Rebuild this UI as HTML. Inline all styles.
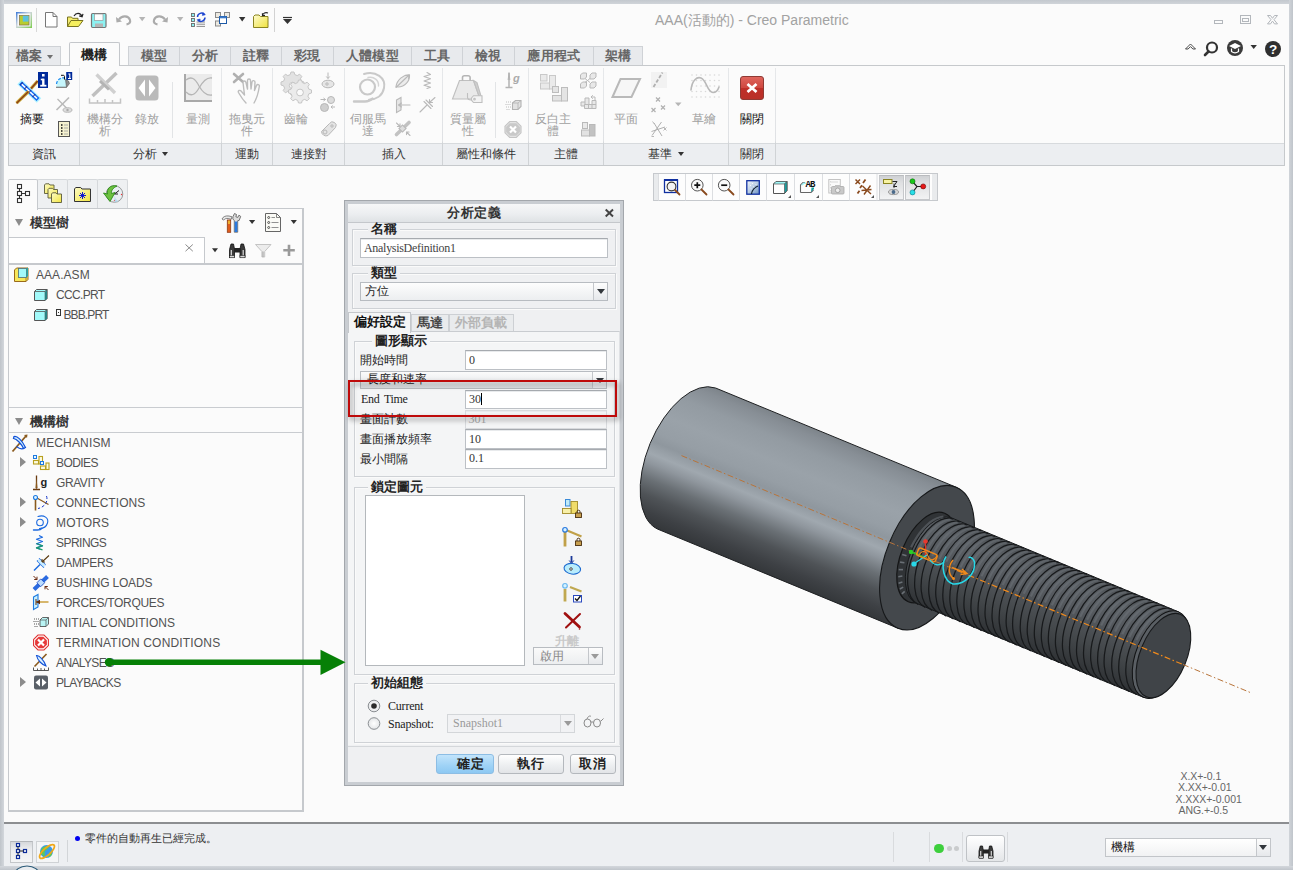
<!DOCTYPE html>
<html lang="zh-Hant">
<head>
<meta charset="utf-8">
<title>AAA - Creo Parametric</title>
<style>
*{box-sizing:border-box;margin:0;padding:0}
html,body{width:1293px;height:870px;overflow:hidden}
body{position:relative;background:#fbfbfb;font-family:"Liberation Sans",sans-serif;font-size:12px;color:#444}
.abs{position:absolute}
.sans{font-family:"Liberation Sans",sans-serif}
.serif{font-family:"Liberation Serif",serif}
/* window frame */
#fr-l{left:0;top:0;width:4px;height:870px;background:linear-gradient(90deg,#bfc4ca,#d3d7dc)}
#fr-t{left:0;top:0;width:1293px;height:4px;background:linear-gradient(180deg,#c3c8ce,#d0d4d9)}
#fr-r{left:1289px;top:0;width:4px;height:870px;background:linear-gradient(90deg,#d0d4d9,#c0c5cb)}
#fr-b{left:0;top:866px;width:1293px;height:4px;background:linear-gradient(180deg,#d3d7dc,#c0c5cb)}
/* title */
#title{left:655px;top:12px;font-size:14px;color:#a2a2a2;white-space:nowrap}
/* ribbon tabs */
.rtab{position:absolute;top:46px;height:19px;background:#e8eaed;border:1px solid #cfd2d6;border-bottom:none;font-family:"Liberation Sans",sans-serif;font-weight:bold;font-size:13.3px;color:#666;text-align:center;line-height:17px;white-space:nowrap;letter-spacing:0.4px}
.rtab.act{top:42px;height:24px;background:#fbfbfb;color:#222;line-height:24px;border-color:#c4c7cb;z-index:3;border-radius:2px 2px 0 0}
#ribbon{left:8px;top:65px;width:1277px;height:101px;border:1px solid #c6c9cc;background:#fbfbfb}
#rlabels{left:9px;top:143px;width:1275px;height:22px;background:#eceef1;border-top:1px solid #d7dadd}
.gsep{position:absolute;top:68px;width:1px;height:97px;background:linear-gradient(180deg,#e6e8ea,#dfe1e4 75%,#d0d3d6 78%)}
.glab{position:absolute;top:144px;height:21px;line-height:20.5px;text-align:center;font-size:12px;color:#333;white-space:nowrap}
.blab{position:absolute;text-align:center;font-size:11.8px;line-height:12px;color:#a0a0a0;white-space:nowrap;transform:translateX(-50%)}
.blab.on{color:#111}
.tsep{position:absolute;width:1px;background:#e2e4e6}
/* left panel */
#lp{left:8px;top:208px;width:296px;height:603.5px;border:1.5px solid #c6c9cd;border-right-width:2.2px;border-bottom-width:2px;background:#fbfbfb}
.ltab{position:absolute;top:179px;height:30px;width:30px;background:#eef0f2;border:1px solid #d5d8db;border-bottom:none;border-radius:2px 2px 0 0}
.ltab.act{background:#fbfbfb;border-color:#c6c9cd;z-index:2;height:31px}
.hline{position:absolute;height:1px;background:#c9ccd0}
.phead{position:absolute;font-family:"Liberation Sans",sans-serif;font-weight:bold;font-size:13px;color:#333;white-space:nowrap}
.ti{position:absolute;font-size:12px;color:#525252;white-space:nowrap;line-height:14px}
.tri-r{position:absolute;width:0;height:0;border-left:6.5px solid #8c8c8c;border-top:5px solid transparent;border-bottom:5px solid transparent;margin-top:-1px}
.tri-d{position:absolute;width:0;height:0;border-top:7px solid #8c8c8c;border-left:4.5px solid transparent;border-right:4.5px solid transparent}
.dd{position:absolute;width:0;height:0;border-top:4px solid #333;border-left:3.5px solid transparent;border-right:3.5px solid transparent}
/* dialog */
#dlg{left:344px;top:201px;width:280px;height:585px;background:#f0f1f3;border:1.5px solid #a9adb2;box-shadow:0 0 0 1px #d4d7da inset}
.fs{position:absolute;border:1px solid #d0d3d7}
.leg{position:absolute;background:#f5f6f7;font-family:"Liberation Sans",sans-serif;font-weight:bold;font-size:12.5px;color:#222;padding:0 3px;line-height:13px;white-space:nowrap}
.inp{position:absolute;background:#fff;border:1px solid #bcc0c5;border-top-color:#a6aaaf;box-shadow:0 1px 0 #e8eaec inset;font-family:"Liberation Serif",serif;font-size:12px;color:#333;line-height:16px;padding-left:3px;white-space:nowrap;overflow:hidden}
.dl{position:absolute;font-size:12px;color:#222;white-space:nowrap;line-height:14px}
.sel{position:absolute;background:linear-gradient(180deg,#fdfdfd,#eceef0);border:1px solid #b8bcc1;font-size:12px;color:#222;line-height:16px;padding-left:4px;white-space:nowrap;overflow:hidden}
.selarr{position:absolute;right:0;top:0;bottom:0;width:14px;border-left:1px solid #c4c7cb;background:linear-gradient(180deg,#fdfdfd,#e6e8eb)}
.selarr:after{content:"";position:absolute;left:2.5px;top:6px;border-top:5.5px solid #33373c;border-left:4px solid transparent;border-right:4px solid transparent}
.selarr.dis:after{border-top-color:#9a9a9a}
.btn{position:absolute;height:20px;border:1px solid #b4b8bd;border-radius:3px;background:linear-gradient(180deg,#ffffff,#eceef0 60%,#e2e4e7);font-family:"Liberation Sans",sans-serif;font-weight:bold;font-size:13px;color:#222;text-align:center;line-height:18px;letter-spacing:1px}
/* status */
#status{left:4px;top:822px;width:1285px;height:44px;background:#edeff2;border-top:2px solid #8c8e91}
</style>
</head>
<body>
<!-- FRAME -->
<div class="abs" id="fr-t"></div><div class="abs" id="fr-l"></div><div class="abs" id="fr-r"></div><div class="abs" id="fr-b"></div>
<div class="abs" id="title">AAA(活動的) - Creo Parametric</div>

<!-- QAT -->
<svg id="qat" class="abs" style="left:0;top:0" width="1293" height="66" viewBox="0 0 1293 66" fill="none">
<defs>
<linearGradient id="gapp" x1="0" y1="0" x2="1" y2="1"><stop offset="0" stop-color="#3a78d8"/><stop offset=".45" stop-color="#cfd6dc"/><stop offset="1" stop-color="#7ccc4c"/></linearGradient>
<linearGradient id="gfold" x1="0" y1="0" x2="1" y2="1"><stop offset="0" stop-color="#fdfbd0"/><stop offset="1" stop-color="#f0e23c"/></linearGradient>
</defs>
<!-- app icon -->
<rect x="16" y="12" width="16" height="16" fill="url(#gapp)"/>
<rect x="17.500" y="13.500" width="13" height="13" fill="#f6f8f8"/>
<rect x="19.500" y="15.500" width="9.500" height="9.500" fill="#b9cc2e" stroke="#8a7a4a" stroke-width=".8"/>
<rect x="22.800" y="15.800" width="5.800" height="5.800" fill="#5cc3df"/>
<path d="M36.500 8 V32" stroke="#d8d8d8"/>
<!-- new -->
<path d="M45.500 12.500 H53 L57 16.500 V27 H45.500 Z" fill="#fff" stroke="#777" stroke-width="1"/><path d="M53 12.500 V16.500 H57" stroke="#777" stroke-width="1"/>
<!-- open -->
<path d="M67.500 26.500 V17 h4 l1 1.300 h5.500 V20" fill="#f4ec70" stroke="#7a7420" stroke-width="1"/>
<path d="M67.500 26.500 L71 20.500 H83 L78.500 26.500 Z" fill="#f6ef5e" stroke="#7a7420" stroke-width="1"/>
<path d="M74 16 C76 12.500 80.500 12.500 82 16.500 m-2.800-.6 l2.900.9 l.9-2.900" stroke="#222" stroke-width="1.200"/>
<!-- save -->
<rect x="91.500" y="13.500" width="14.500" height="14" rx="1.200" fill="#8cf2f2" stroke="#767676" stroke-width="1.200"/>
<rect x="94.500" y="14" width="8.500" height="6.500" fill="#fdfdfd" stroke="#8a8a8a" stroke-width=".6"/>
<rect x="95" y="23.500" width="8" height="3.500" fill="#b5b5b5"/>
<!-- undo -->
<path d="M119 19.500 C122 15 128.500 15.500 130 20 C130.800 22.500 129 24 126.500 24.300" stroke="#ababab" stroke-width="2.200"/>
<path d="M116 17 L116.500 22.500 L122 21.500 Z" fill="#ababab"/>
<path d="M139 17 h6.400 l-3.200 4.200 z" fill="#b5b5b5"/>
<!-- redo -->
<path d="M165 19.500 C162 15 155.500 15.500 154 20 C153.200 22.500 155 24 157.500 24.300" stroke="#ababab" stroke-width="2.200"/>
<path d="M168 17 L167.500 22.500 L162 21.500 Z" fill="#ababab"/>
<path d="M177 17 h6.400 l-3.200 4.200 z" fill="#b5b5b5"/>
<!-- regenerate -->
<g stroke="#6a6a6a" stroke-width=".9"><rect x="191.500" y="13.500" width="3" height="3" fill="#8ef0f0"/><rect x="191.500" y="18.500" width="3" height="3" fill="#8ef0f0"/><rect x="191.500" y="23.500" width="3" height="3" fill="#8ef0f0"/></g>
<path d="M196.500 22 h8.500 M196.500 24.200 h8.500 M196.500 26.400 h8.500" stroke="#8a8a8a" stroke-width="1"/>
<path d="M197.500 17 a4 4 0 0 1 7-2.500 M205 17.500 a4 4 0 0 1-7 2.500" stroke="#1c44d0" stroke-width="1.500"/>
<path d="M203 12.500 l2.300 2.300 l-3 .6 z M199.500 22 l-2.300-2.300 l3-.6 z" fill="#1c44d0" stroke="#1c44d0" stroke-width=".6"/>
<!-- windows -->
<g fill="#ece9e1" stroke="#8a8a8a" stroke-width="1"><rect x="215.500" y="12.500" width="5" height="5"/><rect x="224.500" y="12.500" width="5" height="5"/><rect x="215.500" y="21" width="5" height="5"/></g>
<rect x="219.500" y="16.500" width="7" height="7" fill="#fff" stroke="#1c5aa8" stroke-width="1"/><rect x="219.500" y="16.500" width="7" height="1.800" fill="#3a78c8"/>
<path d="M239 17 h6.400 l-3.200 4.400 z" fill="#333"/>
<!-- folder with arrow -->
<path d="M253.500 27.500 V16.500 l1.500-1.500 h4 l1.500 1.500 h7.500 V27.500 Z" fill="url(#gfold)" stroke="#8a8420" stroke-width="1"/>
<path d="M262.500 15.500 C263 13 265.500 12 268 13 m-5.600.2 l.1 2.500 l2.500-.3" stroke="#222" stroke-width="1.100"/>
<path d="M274.500 8 V32" stroke="#d2d2d2"/>
<path d="M283 17.500 h9" stroke="#333" stroke-width="1.200"/><path d="M283 19 h9 l-4.500 5 z" fill="#333"/>
<!-- window buttons -->
<g stroke="#b3b7bc" stroke-width="1" fill="none">
<rect x="1214.500" y="20.500" width="8" height="3"/>
<rect x="1240.500" y="15.500" width="10" height="8"/><rect x="1242.500" y="18.500" width="6" height="3"/>
<path d="M1267.500 15.500 h3 l2 2.800 l2-2.800 h3 l-3.500 4.200 l3.500 4.200 h-3 l-2-2.800 l-2 2.800 h-3 l3.500-4.200 z"/>
</g>
<!-- right tools -->
<path d="M1185.500 49 L1190.500 44 L1195.500 49 h-2.600 l-2.400-2.400 l-2.400 2.400 z" stroke="#333" stroke-width=".9" fill="#fff"/>
<circle cx="1212" cy="47.500" r="5" stroke="#333" stroke-width="2.200" fill="#fdfdfd"/><path d="M1208.500 51.500 L1205 55" stroke="#333" stroke-width="2.600" stroke-linecap="round"/>
<circle cx="1235" cy="48" r="8" fill="#3a3a3a"/><path d="M1229 46 l6-3 l6 3 l-6 3 z" fill="#fff"/><path d="M1231.500 48.500 v3 c2 1.500 5 1.500 7 0 v-3" stroke="#fff" stroke-width="1.200"/>
<path d="M1250.500 45 h6.400 l-3.200 4 z" fill="#333"/>
<circle cx="1273" cy="49" r="8" fill="#2f2f2f"/>
<text x="1273" y="54" text-anchor="middle" font-family="Liberation Sans" font-weight="bold" font-size="13.500" fill="#fff">?</text>
</svg>

<!-- RIBBON TABS -->
<div class="rtab" style="left:8px;width:53px;text-align:left;padding-left:7px">檔案<span class="dd" style="left:38px;top:8px;border-top-color:#707070"></span></div>
<div class="rtab act" style="left:69px;width:51px">機構</div>
<div class="rtab" style="left:128px;width:52px">模型</div>
<div class="rtab" style="left:179px;width:52px">分析</div>
<div class="rtab" style="left:230px;width:52px">註釋</div>
<div class="rtab" style="left:281px;width:53px">彩現</div>
<div class="rtab" style="left:333px;width:79px">人體模型</div>
<div class="rtab" style="left:411px;width:52px">工具</div>
<div class="rtab" style="left:462px;width:53px">檢視</div>
<div class="rtab" style="left:514px;width:80px">應用程式</div>
<div class="rtab" style="left:593px;width:50px">架構</div>

<!-- RIBBON -->
<div class="abs" id="ribbon"></div>
<div class="abs" id="rlabels"></div>
<div id="rib-items">
<!-- group separators -->
<div class="gsep" style="left:79px"></div><div class="gsep" style="left:221px"></div><div class="gsep" style="left:272px"></div><div class="gsep" style="left:344px"></div><div class="gsep" style="left:442px"></div><div class="gsep" style="left:528px"></div><div class="gsep" style="left:603px"></div><div class="gsep" style="left:728px"></div><div class="gsep" style="left:775px"></div>
<div class="tsep" style="left:172px;top:82px;height:56px"></div>
<div class="tsep" style="left:495px;top:82px;height:56px"></div>
<!-- group labels -->
<div class="glab" style="left:9px;width:70px">資訊</div>
<div class="glab" style="left:80px;width:141px">分析 <span style="display:inline-block;width:0;height:0;border-top:4.5px solid #333;border-left:3.3px solid transparent;border-right:3.3px solid transparent;vertical-align:2px;margin-left:2px"></span></div>
<div class="glab" style="left:222px;width:50px">運動</div>
<div class="glab" style="left:273px;width:71px">連接對</div>
<div class="glab" style="left:345px;width:97px">插入</div>
<div class="glab" style="left:443px;width:85px">屬性和條件</div>
<div class="glab" style="left:529px;width:74px">主體</div>
<div class="glab" style="left:604px;width:124px">基準 <span style="display:inline-block;width:0;height:0;border-top:4.5px solid #333;border-left:3.3px solid transparent;border-right:3.3px solid transparent;vertical-align:2px;margin-left:2px"></span></div>
<div class="glab" style="left:729px;width:46px">關閉</div>
<!-- button labels -->
<div class="blab on" style="left:31.5px;top:113px">摘要</div>
<div class="blab" style="left:105px;top:113px">機構分<br>析</div>
<div class="blab" style="left:146.5px;top:113px">錄放</div>
<div class="blab" style="left:198px;top:113px">量測</div>
<div class="blab" style="left:246.5px;top:113px">拖曳元<br>件</div>
<div class="blab" style="left:295.5px;top:113px">齒輪</div>
<div class="blab" style="left:368px;top:113px">伺服馬<br>達</div>
<div class="blab" style="left:468px;top:113px">質量屬<br>性</div>
<div class="blab" style="left:553px;top:113px">反白主<br>體</div>
<div class="blab" style="left:626px;top:113px">平面</div>
<div class="blab" style="left:704px;top:113px">草繪</div>
<div class="blab on" style="left:752px;top:113px">關閉</div>
<!-- icons -->
<svg class="abs" style="left:0;top:0" width="1293" height="170" viewBox="0 0 1293 170" fill="none">
<!-- summary -->
<g>
 <path d="M28 92 L37.700 81" stroke="#c8a832" stroke-width="3.200"/><path d="M28 92 L37.700 81" stroke="#8a3a18" stroke-width="1.300"/>
 <path d="M19.500 82 L39 100.500" stroke="#a8f0ff" stroke-width="6.400"/>
 <path d="M20.500 83 L38 99.500" stroke="#1464f0" stroke-width="4.200"/>
 <path d="M21.500 84 L37 98.500" stroke="#fff" stroke-width="1.700"/>
 <path d="M21 83.500 L37.500 99" stroke="#0a208a" stroke-width="4.200" stroke-dasharray="1.200 4.500" opacity=".7"/>
 <path d="M16.500 103.200 L28.500 91.500" stroke="#c8a832" stroke-width="3.200"/><path d="M16.500 103.200 L28.500 91.500" stroke="#8a3a18" stroke-width="1.300"/>
 <rect x="38" y="72" width="10" height="16" fill="#002a9a"/>
 <rect x="42" y="74" width="2.600" height="2.500" fill="#fff"/><path d="M40.800 79.500 h3" stroke="#fff" stroke-width="1.600"/><path d="M43.300 78.700 v7" stroke="#fff" stroke-width="2.400"/><path d="M40.200 85.700 h6.200" stroke="#fff" stroke-width="1.800"/>
</g>
<!-- small info 1 -->
<g>
 <path d="M56.500 87 C56 81 59.500 77.500 64 77.500 L66 78.500 L66.500 87 Z" fill="#c6f6fc"/>
 <path d="M56.500 84 C57 80 60 77.500 65 77.800" stroke="#1a8af0" stroke-width="1.200" stroke-dasharray="3 1.500"/>
 <path d="M65.500 79.500 L68.500 81 L69.500 83.500 L66.500 87.500 Z" fill="#8a8a8a" stroke="#555" stroke-width=".6"/>
 <path d="M56 87.300 H66.500" stroke="#7a7a7a" stroke-width="1.200"/>
 <path d="M61 75.300 h2.200 c1 0 1.300 .5 1.300 1.500 v2.800" stroke="#111" stroke-width="1"/>
 <rect x="66.200" y="72" width="6" height="8" fill="#002a9a"/><path d="M68.300 74 h1.500 v4 M68 78.500 h3" stroke="#fff" stroke-width="1.100"/>
</g>
<!-- small 2 gray X with eye -->
<g stroke="#b9b9b9">
 <path d="M56.500 110 L69 97.500" stroke-width="1.600"/><path d="M57.500 99 L68 109.500" stroke-width="1.300"/>
 <ellipse cx="67.500" cy="110" rx="4.500" ry="2.300" stroke-width="1" fill="#ddd"/><circle cx="67.500" cy="110" r="1.200" fill="#aaa" stroke="none"/>
</g>
<!-- small 3 list -->
<g>
 <rect x="58.500" y="121.500" width="11" height="15" fill="#f6f2cf" stroke="#555" stroke-width="1"/>
 <path d="M61 125 h1.500 M61 128 h1.500 M61 131 h1.500 M61 134 h1.500" stroke="#111" stroke-width="1.500"/>
 <path d="M64 125 h4 M64 128 h4 M64 131 h4 M64 134 h4" stroke="#999" stroke-width="0.800"/>
</g>
<!-- mechanism analysis (gray) -->
<g>
 <path d="M92.500 96 L116.500 73" stroke="#c0c0c0" stroke-width="3.400"/><path d="M96.500 74.500 L115 93" stroke="#d0d0d0" stroke-width="3.400"/>
 <path d="M100 81 L109 89.500" stroke="#b4b4b4" stroke-width="3"/>
 <path d="M89.500 98.500 V103 H120.500 V98.500 M97.500 103 v-3 M105 103 v-4 M112.500 103 v-3" stroke-width="1.500" stroke="#c4c4c4"/>
</g>
<!-- playback -->
<rect x="135.500" y="75.500" width="23" height="25" rx="3.500" fill="#bababa"/>
<path d="M145 79.500 L145 96.500 L138.500 88 Z M149 79.500 L149 96.500 L155.500 88 Z" fill="#fff"/>
<!-- measure -->
<g>
 <rect x="185" y="74" width="27" height="27" fill="#ebebeb"/>
 <path d="M185 74 V101 H212" stroke="#a9a9a9" stroke-width="2"/>
 <path d="M186 92 C191 97 195 95 199 88 C203 81 207 77 212 78" stroke="#b5b5b5" stroke-width="1.300"/>
 <path d="M186 80 C191 76 195 78 199 86 C203 93 207 96 212 95" stroke="#b5b5b5" stroke-width="1.300"/>
</g>
<!-- drag hand -->
<g stroke="#bdbdbd" stroke-width="1.400" stroke-linecap="round" stroke-linejoin="round">
 <path d="M234 74 L243 82 M243 74 L234 82" stroke-width="2.600" stroke="#b0b0b0"/>
 <path d="M246 103 C242 99 240 95 238.500 92.500 C237.500 90.500 240 89.500 241.500 91.500 L244.500 95 L243 82.500 C243 80.500 245.500 80.500 246 82.500 L247.500 89 L247.500 80.500 C247.500 78.500 250.500 78.500 250.500 80.500 L251 89 L252 82 C252.300 80 255 80.300 255 82.300 L254.500 90.500 L256.500 85.500 C257.300 83.800 259.800 84.500 259.300 86.500 C258.500 92 257 98 254 103" fill="#fbfbfb"/>
</g>
<!-- gears -->
<g fill="#e2e2e2" stroke="#c6c6c6" stroke-width="1">
 <path d="M291 72 l3 0 l.8 2.600 l2.400 1 l2.400-1.400 l2.200 2.200 l-1.400 2.400 l1 2.400 l2.600.8 l0 3 l-2.600.8 l-1 2.400 l1.400 2.400 l-2.200 2.200 l-2.400-1.400 l-2.400 1 l-.8 2.600 l-3 0 l-.8-2.600 l-2.400-1 l-2.400 1.400 l-2.200-2.200 l1.400-2.400 l-1-2.400 l-2.600-.8 l0-3 l2.600-.8 l1-2.400 l-1.400-2.400 l2.200-2.200 l2.400 1.400 l2.400-1 z"/>
 <circle cx="292.500" cy="85.500" r="3.200" fill="#fbfbfb"/>
 <path d="M298.500 80 l3 0 l.8 2.600 l2.400 1 l2.400-1.400 l2.200 2.200 l-1.400 2.400 l1 2.400 l2.600.8 l0 3 l-2.600.8 l-1 2.400 l1.400 2.400 l-2.200 2.200 l-2.400-1.400 l-2.400 1 l-.8 2.600 l-3 0 l-.8-2.600 l-2.400-1 l-2.400 1.400 l-2.200-2.200 l1.400-2.400 l-1-2.400 l-2.600-.8 l0-3 l2.600-.8 l1-2.400 l-1.400-2.400 l2.200-2.200 l2.400 1.400 l2.400-1 z" fill="#ebebeb"/>
 <circle cx="300" cy="92.500" r="3.400" fill="#fbfbfb"/>
</g>
<!-- small col @ 320-336 -->
<g stroke="#b8b8b8" stroke-width="1">
 <ellipse cx="328" cy="84" rx="6" ry="3.800" fill="#e6e6e6"/><circle cx="327" cy="84" r="1.200"/><path d="M328 72.500 v6 M326.300 76.500 l1.700 2 l1.700-2"/>
 <circle cx="331" cy="100" r="3.500" fill="#dcdcdc"/><circle cx="324.500" cy="107.500" r="4" fill="#cfcfcf"/><path d="M320.500 99.500 h5 m-2-1.500 l2 1.500 l-2 1.500 M335 107 h-4 m1.700-1.500 l-1.700 1.500 l1.700 1.500"/>
 <path d="M321.500 131.500 L329.500 123.500 A3.500 3.500 0 0 1 335.500 127.500 L328 135.500 A4.600 4.600 0 0 1 321.500 131.500 Z" fill="#e4e4e4"/><circle cx="325" cy="132" r="2"/><circle cx="332" cy="126" r="1.200"/>
</g>
</svg>
<svg class="abs" style="left:0;top:0" width="1293" height="170" viewBox="0 0 1293 170" fill="none">
<!-- servo motor -->
<g stroke="#c9c9c9" stroke-linecap="round">
 <circle cx="367.500" cy="87" r="7.500" stroke-width="2.200"/>
 <path d="M364 74 C376 70.500 386 78 384 88 C382.500 96 376 99.500 369 99.800" stroke-width="2"/>
 <path d="M368 77.500 C374 76 379 80.500 378.500 86" stroke-width="1.400" stroke="#d4d4d4"/>
 <path d="M354 101.500 H365 C368 101.500 370.500 100.500 372.500 98.500" stroke-width="2.400"/>
</g>
<!-- col1 small icons -->
<g stroke="#b9b9b9" stroke-width="1.100" stroke-linecap="round">
 <path d="M396 86.500 C397 80 403 74.500 409.500 75 C410 81 405 86.500 398 87 Z" fill="#ececec"/><path d="M396 87.500 L409 75 m-3.800.3 l3.800-.3 l-.4 3.800"/>
 <path d="M396.500 100 L401 97.500 V110 L396.500 112.500 Z" fill="#e6e6e6"/><path d="M398.500 105 H410 M398.500 105 l3-2 M398.500 105 l3 2"/>
 <path d="M396.500 134.500 L409 122.500" stroke-width="3.600" stroke="#c2c2c2"/><rect x="400" y="126" width="5" height="5" fill="#ddd" transform="rotate(-45 402.500 128.500)"/><path d="M396.500 123 l3.500 3.500 m0-2.600 v2.600 h-2.600 M410 135.500 l-3.500-3.500 m0 2.600 v-2.600 h2.600"/>
</g>
<!-- col2 -->
<g stroke="#b9b9b9" stroke-width="1.100" stroke-linecap="round" stroke-linejoin="round">
 <path d="M427 72.500 l3.500 2 l-6.500 2 l6.500 2.200 l-6.500 2.200 l6.500 2.200 l-6.500 2.200 l6.500 2 l-3.500 1.200"/>
 <path d="M420 112 L426.500 105.500 M424 101.500 L431 108.500 M426 100 l6.500 6.500 M429.500 102.500 L435 97.500 M429.500 102.500 v-3 M429.500 102.500 h3"/>
</g>
<!-- mass properties -->
<g stroke="#bfbfbf" stroke-width="1.100">
 <path d="M459.500 80.500 L452.500 99 H480 L473.500 80.500 Z" fill="#e9e9e9"/>
 <path d="M473.500 80.500 L477 82.500 L481 96 L480 99 Z" fill="#cfcfcf"/>
 <path d="M462.500 80.500 v-3 a1.800 1.800 0 0 1 1.800-1.800 h4 a1.800 1.800 0 0 1 1.800 1.800 v3" stroke-width="1.600" stroke="#b5b5b5"/>
 <path d="M467.500 93 v4 c0 2 1.500 3 3.500 3" />
 <path d="M471.500 98 l2-2.300 h8.500 v6.800 h-8.500 l-2-2.300 z" fill="#f3f3f3"/><circle cx="474.500" cy="99.200" r=".8"/>
</g>
<!-- col 505-521 -->
<g stroke="#b3b3b3" stroke-width="1.100">
 <path d="M509 72.500 V87 M505.500 87.500 h7" stroke-width="1.500"/><path d="M508.200 80 l.8-7 l.8 7" />
 <text x="513" y="82" font-family="Liberation Sans" font-size="11" font-style="italic" fill="#aaa" stroke="none" font-weight="bold">g</text>
 <path d="M512.500 103 L515.500 100.500 H521 V106.500 L518 109.500 H512.500 Z" fill="#e2e2e2"/><path d="M512.500 103 H518 V109.500 M518 103 L521 100.500" stroke-width=".8"/>
 <path d="M506 102 h1 m1 0 h1 m1 0 h1 M505.500 104.500 h1 m1 0 h1 m1 0 h1 M506 107 h1 m1 0 h1 m1 0 h1 M506.500 109.500 h1 m1 0 h1" stroke-width="1" stroke="#bdbdbd"/>
 <path d="M509.700 121.500 h6.600 l4.700 4.700 v6.600 l-4.700 4.700 h-6.600 l-4.700-4.700 v-6.600 z" fill="#e3e3e3" stroke="#c4c4c4"/>
 <path d="M509.700 123.300 h6.600 l3.600 3.600 v5.200 l-3.600 3.600 h-6.600 l-3.600-3.600 v-5.200 z" fill="#c9c9c9" stroke="none"/>
 <path d="M510 126.500 l6 6 M516 126.500 l-6 6" stroke="#fff" stroke-width="2.200"/>
</g>
<!-- highlight bodies -->
<g stroke="#c9c9c9" stroke-width="1" fill="#eaeaea">
 <rect x="540.500" y="74.500" width="6.500" height="6.500"/><rect x="540.500" y="83" width="9" height="6"/><rect x="549.500" y="75.500" width="6" height="13.500"/>
 <g stroke="#bdbdbd" fill="#e4e4e4"><rect x="552.500" y="86.500" width="6" height="6"/><rect x="552.500" y="95.500" width="9" height="5.500"/><rect x="561.500" y="87.500" width="6" height="13.500"/></g>
</g>
<!-- col 580-596 -->
<g stroke="#b9b9b9" stroke-width="1" fill="#e8e8e8">
 <path d="M580.500 75 l2-2 h4 v4 l-2 2 h-4 z M590 75 l2-2 h4 v4 l-2 2 h-4 z M580.500 84 l2-2 h4 v4 l-2 2 h-4 z M590 84 l2-2 h4 v4 l-2 2 h-4 z"/><path d="M585 78.500 l5 4 M590 78.500 l-5 4" />
 <path d="M581 102 h4 v-4 h4 v8 h-8 z M585 102 v4 M581 106 h0" /><path d="M584.500 108.500 h11.500 v-8 h-4 v4 h-7.500 z M588.500 104.500 v4 M592 104.500 v4 M592 104.500 h4"/><path d="M595 100 v-3 h-4 m1.800-1.800 l-1.800 1.800 l1.800 1.800" fill="none"/>
 <rect x="582.500" y="122.500" width="5" height="6" fill="#e9e9e9"/><rect x="581.500" y="130" width="8" height="6" fill="#e2e2e2"/><rect x="589.500" y="124.500" width="5.500" height="11.500" fill="#c2c2c2"/>
</g>
<!-- plane -->
<path d="M612.500 97 L620.500 79 H640 L631.500 97 Z" stroke="#b9b9b9" stroke-width="2" fill="#f6f6f6"/>
<!-- col 651-667 -->
<g stroke="#b0b0b0" stroke-width="1.200">
 <rect x="651" y="72" width="16" height="16" fill="#f2f2f2" stroke="none"/>
 <path d="M653.500 87 L662.500 72.500" stroke-width="1.800" stroke-dasharray="3.500 1.800"/>
 <path d="M656 97.500 l4 4 m0-4 l-4 4 M661 105.500 l4 4 m0-4 l-4 4 M651.500 108 l4 4 m0-4 l-4 4"/>
 <path d="M652 135.500 L661.500 122 M654 123 L662 136 M651.500 131.500 L665 127" stroke-width="1"/><path d="M663.500 127.500 l3 3 m0-3 l-3 3 M652.500 121.500 l2 2.500 M651.500 136.500 h2.500" stroke-width=".9"/>
</g>
<path d="M675 102.500 h6.500 l-3.250 3.800 z" fill="#b5b5b5"/>
<!-- sketch -->
<g fill="#d9d9d9">
<circle cx="692" cy="75" r=".8"/><circle cx="696.500" cy="75" r=".8"/><circle cx="701" cy="75" r=".8"/><circle cx="705.500" cy="75" r=".8"/><circle cx="710" cy="75" r=".8"/><circle cx="714.500" cy="75" r=".8"/><circle cx="719" cy="75" r=".8"/>
<circle cx="692" cy="80.500" r=".8"/><circle cx="696.500" cy="80.500" r=".8"/><circle cx="701" cy="80.500" r=".8"/><circle cx="705.500" cy="80.500" r=".8"/><circle cx="710" cy="80.500" r=".8"/><circle cx="714.500" cy="80.500" r=".8"/><circle cx="719" cy="80.500" r=".8"/>
<circle cx="692" cy="86" r=".8"/><circle cx="696.500" cy="86" r=".8"/><circle cx="701" cy="86" r=".8"/><circle cx="705.500" cy="86" r=".8"/><circle cx="710" cy="86" r=".8"/><circle cx="714.500" cy="86" r=".8"/><circle cx="719" cy="86" r=".8"/>
<circle cx="692" cy="91.500" r=".8"/><circle cx="696.500" cy="91.500" r=".8"/><circle cx="701" cy="91.500" r=".8"/><circle cx="705.500" cy="91.500" r=".8"/><circle cx="710" cy="91.500" r=".8"/><circle cx="714.500" cy="91.500" r=".8"/><circle cx="719" cy="91.500" r=".8"/>
<circle cx="692" cy="97" r=".8"/><circle cx="696.500" cy="97" r=".8"/><circle cx="701" cy="97" r=".8"/><circle cx="705.500" cy="97" r=".8"/><circle cx="710" cy="97" r=".8"/><circle cx="714.500" cy="97" r=".8"/><circle cx="719" cy="97" r=".8"/>
</g>
<path d="M691 90 C692 80 697 76.500 701 78 C707 80.500 707 92 713 92.500 C716 92.500 718 90 719 87" stroke="#b9b9b9" stroke-width="1.600" stroke-linecap="round"/>
<!-- close -->
<defs><linearGradient id="gcl" x1="0" y1="0" x2="0" y2="1"><stop offset="0" stop-color="#e0665e"/><stop offset=".48" stop-color="#cf4840"/><stop offset=".5" stop-color="#bf2f28"/><stop offset="1" stop-color="#b93028"/></linearGradient></defs>
<rect x="740.500" y="76.500" width="23" height="23" rx="2.500" fill="url(#gcl)" stroke="#8e3a34" stroke-width="1"/>
<path d="M747.500 84 l9 8 M756.500 84 l-9 8" stroke="#fff" stroke-width="2.800"/>
</svg>
</div>

<!-- LEFT PANEL -->
<div id="left">
<div class="ltab act" style="left:8px"></div><div class="ltab" style="left:37px;width:31px"></div><div class="ltab" style="left:67px;width:31px"></div><div class="ltab" style="left:97px;width:31px"></div>
<div class="abs" id="lp"></div>
<div class="abs" style="left:9.500px;top:207px;width:27.500px;height:3px;background:#fbfbfb;z-index:3"></div>
<!-- headers -->
<div class="tri-d" style="left:15px;top:219px"></div>
<div class="phead" style="left:30px;top:214px">模型樹</div>
<div class="abs" style="left:9px;top:237px;width:196px;height:27px;border:1px solid #c6c9cd;border-left:none;background:#fff"></div>
<div class="hline" style="left:9px;top:263px;width:293px;background:#c6c9cd;height:1.500px"></div>
<div class="hline" style="left:9px;top:407px;width:293px"></div>
<div class="hline" style="left:9px;top:432px;width:293px"></div>
<div class="tri-d" style="left:15px;top:418px"></div>
<div class="phead" style="left:30px;top:413px">機構樹</div>
<!-- model tree text -->
<div class="ti" style="left:36px;top:267.5px;letter-spacing:0.05px">AAA.ASM</div>
<div class="ti" style="left:56px;top:287.5px;letter-spacing:-0.66px">CCC.PRT</div>
<div class="ti" style="left:63.500px;top:307.5px;letter-spacing:-0.88px">BBB.PRT</div>
<!-- mech tree text -->
<div class="ti" style="left:36px;top:435.5px;letter-spacing:0.15px">MECHANISM</div>
<div class="ti" style="left:56px;top:455.5px;letter-spacing:-0.56px">BODIES</div>
<div class="ti" style="left:56px;top:475.5px;letter-spacing:-0.43px">GRAVITY</div>
<div class="ti" style="left:56px;top:495.5px;letter-spacing:0.06px">CONNECTIONS</div>
<div class="ti" style="left:56px;top:515.5px;letter-spacing:0.13px">MOTORS</div>
<div class="ti" style="left:56px;top:535.5px;letter-spacing:-0.53px">SPRINGS</div>
<div class="ti" style="left:56px;top:555.5px;letter-spacing:-0.35px">DAMPERS</div>
<div class="ti" style="left:56px;top:575.5px;letter-spacing:-0.19px">BUSHING LOADS</div>
<div class="ti" style="left:56px;top:595.5px;letter-spacing:-0.3px">FORCES/TORQUES</div>
<div class="ti" style="left:56px;top:615.5px;letter-spacing:-0.0px">INITIAL CONDITIONS</div>
<div class="ti" style="left:56px;top:635.5px;letter-spacing:0.18px">TERMINATION CONDITIONS</div>
<div class="ti" style="left:56px;top:655.5px;letter-spacing:-0.62px">ANALYSES</div>
<div class="ti" style="left:56px;top:675.5px;letter-spacing:-0.66px">PLAYBACKS</div>
<div class="tri-r" style="left:19.500px;top:458px"></div><div class="tri-r" style="left:19.500px;top:498px"></div><div class="tri-r" style="left:19.500px;top:518px"></div><div class="tri-r" style="left:19.500px;top:678px"></div>
<svg class="abs" style="left:0;top:170px;z-index:5" width="350" height="530" viewBox="0 170 350 530" fill="none">
<defs><linearGradient id="gfold2" x1="0" y1="0" x2="1" y2="1"><stop offset="0" stop-color="#fdfbc8"/><stop offset="1" stop-color="#f3e640"/></linearGradient></defs>
<!-- tab icons -->
<g stroke="#333" stroke-width="1.100" fill="#fff"><rect x="17.500" y="184.500" width="4" height="4"/><rect x="17.500" y="191.500" width="4" height="4"/><rect x="17.500" y="198.500" width="4" height="4"/><rect x="25.500" y="191.500" width="4" height="4"/><path d="M19.500 188.500 v3 m0 4 v3 M21.500 193.500 h4" fill="none"/></g>
<g stroke="#5a5a3a" stroke-width=".9" fill="url(#gfold2)"><path d="M44.500 193.500 v-8.500 l1-1.200 h3.500 l1 1.200 h4 v8.500 z"/><path d="M48 198 v-8.500 l1-1.200 h3.500 l1 1.200 h4 v8.500 z"/><path d="M51.500 202.500 v-8.500 l1-1.200 h3.500 l1 1.200 h4.500 v8.500 z"/></g>
<path d="M74.500 201.500 V189 l1.200-1.500 h5 l1.200 1.500 h8.600 V201.500 Z" fill="url(#gfold2)" stroke="#333" stroke-width="1"/>
<path d="M82.500 192 v7 M79 195.500 h7 M80 193 l5 5 M85 193 l-5 5" stroke="#1018d0" stroke-width="1"/>
<circle cx="114.500" cy="194" r="8.300" fill="#e8eef2" stroke="#999" stroke-width="1"/><path d="M114.500 194 L119 190.500 M114.500 194 h3.500" stroke="#222" stroke-width="1"/><circle cx="121.500" cy="194.500" r=".7" fill="#e33"/><circle cx="114.500" cy="200.500" r=".7" fill="#e33"/>
<path d="M114.500 194 a8.300 8.300 0 0 0 4 7.200 a8.300 8.300 0 0 1 -4 1.100 z" fill="#a8d8f0" opacity=".7"/>
<path d="M117 186 C110 184.500 106.500 189 107.500 194 L103.500 193 L110 201.500 L115 192.500 L111.500 193.500 C111 190.500 113 188 117 186 Z" fill="#6cc040" stroke="#2a8a18" stroke-width=".9"/>
<!-- tools icon -->
<g>
<path d="M222 219 c1-2.500 4-3.500 7-3 l3 .8 l-.8 2.500 l-3-.8 c-2-.3-3.600.3-4.500 1.600 z" fill="#e8e8e8" stroke="#666" stroke-width=".8"/>
<rect x="227.300" y="220" width="3.400" height="12.300" fill="#f0b030" stroke="#8a2a10" stroke-width=".8"/><rect x="228.300" y="224" width="1.400" height="8" fill="#d83a18"/>
<path d="M233 216.500 l1.500-3 l2 1 l-.6 2.300 l2 .6 l1-2.200 l1.800 1.200 l-1.500 4 l-1.500 .3 v11.500 h-3.400 v-11.500 l-1.500-1.800 z" fill="#dcdcdc" stroke="#555" stroke-width=".8"/><rect x="234.700" y="221.500" width="2.600" height="10.500" fill="#2a7ae0"/>
</g>
<path d="M249 220 h6.200 l-3.100 4 z" fill="#333"/>
<path d="M265.500 213.500 h11 l4 4 v14 h-15 z" fill="#fbfbf6" stroke="#666" stroke-width="1"/><path d="M276.500 213.500 v4 h4" stroke="#666" stroke-width=".8"/>
<g stroke="#333" stroke-width=".8"><circle cx="268.700" cy="217.500" r="1"/><circle cx="268.700" cy="222.500" r="1"/><circle cx="268.700" cy="227.500" r="1"/><path d="M271.500 217.500 h3.500 M271.500 222.500 h7 M271.500 227.500 h7" stroke="#777"/></g>
<path d="M290.700 220 h6.200 l-3.100 4 z" fill="#333"/>
<!-- search row -->
<path d="M185.500 244.500 l7.300 6.700 M192.800 244.500 l-7.300 6.700" stroke="#8a8a8a" stroke-width="1"/>
<path d="M212 248.200 h6 l-3 4 z" fill="#333"/>
<g><path d="M229.500 257.500 v-8 l1.500-5.500 h2.500 l1 5 v8.500 z M245 257.500 v-8 l-1.500-5.500 h-2.500 l-1 5 v8.500 z" fill="#3a3a3a" stroke="#111" stroke-width=".8"/><rect x="234" y="248" width="6.500" height="4.500" fill="#222"/><path d="M231.300 250 v6.500 M243.200 250 v6.500" stroke="#ddd" stroke-width="1.200"/><rect x="229.500" y="255.500" width="5" height="2.300" fill="#d8d8d8" stroke="#111" stroke-width=".5"/><rect x="240" y="255.500" width="5" height="2.300" fill="#d8d8d8" stroke="#111" stroke-width=".5"/></g>
<path d="M255.500 244.500 h15.500 l-6.300 7 v5.500 h-2.800 v-5.500 z" fill="#ececec" stroke="#c4c4c4" stroke-width="1"/><path d="M263 251.500 v5.500" stroke="#aaa" stroke-width="1.200"/>
<path d="M289 244.700 v11.300 M283.300 250.300 h11.500" stroke="#9a9a9a" stroke-width="2.600"/>
<!-- model tree icons -->
<path d="M14.500 270 l2-2 h11.500 v11.500 l-2 2 h-11.500 z" fill="#f7e75a" stroke="#9a6a1a" stroke-width="1"/><path d="M26 281.500 v-11.500 M26 270 l2-2" stroke="#9a6a1a" stroke-width=".8"/>
<rect x="18.500" y="268.500" width="8" height="9" fill="#a2fafa" stroke="#4a6a7a" stroke-width=".8"/><path d="M26.500 268.500 v9 l1.500-1.500 v-8.500 z" fill="#28a8a8"/>
<g><path d="M34.500 291.500 l2-2 h10.500 v9 l-2 2 h-10.500 z" fill="#a2fafa" stroke="#555" stroke-width="1"/><path d="M45 291.500 v9 l2-2 v-9 z" fill="#189898" stroke="#555" stroke-width=".6"/><path d="M34.500 291.500 h10.500 l2-2" stroke="#555" stroke-width=".8"/></g>
<g transform="translate(0 20)"><path d="M34.500 291.500 l2-2 h10.500 v9 l-2 2 h-10.500 z" fill="#a2fafa" stroke="#555" stroke-width="1"/><path d="M45 291.500 v9 l2-2 v-9 z" fill="#189898" stroke="#555" stroke-width=".6"/><path d="M34.500 291.500 h10.500 l2-2" stroke="#555" stroke-width=".8"/></g>
<rect x="56.500" y="309.500" width="4" height="6" stroke="#333" stroke-width="1"/><rect x="58" y="312" width="1" height="1" fill="#333"/>
<!-- MECHANISM -->
<path d="M12.500 451.500 L26 436" stroke="#8a5a1e" stroke-width="1.800"/><path d="M24 435 l3.500-.5 l-.5 3.500" fill="#8a5a1e"/>
<path d="M14 436.500 C17 435.500 22 440 25.500 447.500 L23.500 448.500 C21.500 444 17 439 13.500 438.500 Z" fill="#cfeefe" stroke="#1050d8" stroke-width="1.200"/><path d="M16.500 446.500 c3 2.500 6 2.800 8 1.500" stroke="#1050d8" stroke-width="1.200"/>
<!-- BODIES -->
<g stroke="#b8a020" stroke-width="1.100" fill="#fdfbe0"><rect x="33.500" y="460.500" width="5" height="3.500"/><rect x="39" y="456.500" width="3.500" height="7.500"/><rect x="40.500" y="466" width="5" height="3.500"/><rect x="46" y="463" width="3" height="6.500"/></g>
<g stroke="#1c7ae0" stroke-width="1" fill="#eaf6ff"><rect x="33.500" y="455.500" width="3" height="3"/><rect x="40.500" y="461.500" width="3" height="3"/></g>
<!-- GRAVITY -->
<path d="M36.500 475.500 V488.500 M33 489.500 h7" stroke="#6a3a10" stroke-width="1.300"/><path d="M35.500 488 l1-10 l1 10 z" fill="#8a5a1e"/>
<text x="40.500" y="485.500" font-family="Liberation Sans" font-weight="bold" font-size="11" fill="#222">g</text>
<!-- CONNECTIONS -->
<path d="M35.500 497.500 V510.500" stroke="#8a5a1e" stroke-width="1.600"/><path d="M36 497.500 L48.500 504.500" stroke="#8a5a1e" stroke-width="1.300"/><circle cx="35.500" cy="497.500" r="2" fill="#dff2ff" stroke="#1c7ae0" stroke-width="1.100"/>
<path d="M46.500 496 C48.500 502 44 507.500 38 508.500" stroke="#1838c8" stroke-width="1" stroke-dasharray="3 2"/>
<!-- MOTORS -->
<g stroke="#1c6ae0" stroke-width="1.100" stroke-linecap="round"><circle cx="40" cy="522.500" r="3.300"/><path d="M38 516.500 C44 514.500 49 518 47.500 523 C46.500 526.500 43 528.500 39.500 528.500"/><path d="M33.500 530 h4 c2 0 3.500-.5 4.500-1.800" stroke-width="1.400"/></g>
<!-- SPRINGS -->
<path d="M39 535.500 l3.500 1.800 l-6 2 l6 2.200 l-6 2.200 l6 2.200 l-6 2 l3.500 1.300" stroke="#1c6ae0" stroke-width="1.200" stroke-linejoin="round"/><path d="M36.500 543.500 l6 2.200 l-6 2.200 l6 2" stroke="#1a9a6a" stroke-width="1.200" stroke-linejoin="round"/>
<!-- DAMPERS -->
<path d="M34 570.500 L40 564.500" stroke="#1c6ae0" stroke-width="1.400"/><path d="M37 560.500 L44 567.500 M39 558.500 l6.500 6.500" stroke="#1c6ae0" stroke-width="1.200"/><path d="M37.500 561 l2-2 l6 6 l-2 2 z" fill="#c8ecff"/><path d="M42 562 L49 555.500 M42 562 v-3 M42 562 h3" stroke="#5a3a10" stroke-width="1.100"/>
<!-- BUSHING -->
<path d="M34 589.500 L47.500 576.500" stroke="#2a6ae0" stroke-width="4"/><rect x="38" y="580" width="5.500" height="5.500" fill="#bcdcff" stroke="#1c4ac0" stroke-width=".8" transform="rotate(-45 40.750 582.750)"/>
<path d="M33.500 576 l3.500 3.500 m0-2.800 v2.800 h-2.800 M48.500 590 l-3.500-3.500 m0 2.800 v-2.800 h2.800" stroke="#6a2a10" stroke-width="1"/>
<!-- FORCES -->
<path d="M33.500 597 L38 594.500 V607 L33.500 609.500 Z" fill="#c8f0ff" stroke="#1c7ae0" stroke-width="1.100"/><path d="M36 602 H48.500" stroke="#c89a30" stroke-width="1.400"/><path d="M36 602 l4-2.200 v4.400 z" fill="#5a2a10"/><path d="M36 599 v6" stroke="#5a2a10" stroke-width="1"/>
<!-- INITIAL COND -->
<path d="M40 620 L42.500 617.500 H48.500 V624 L46 626.500 H40 Z" fill="#b8f4f4" stroke="#555" stroke-width=".9"/><path d="M40 620 H46 V626.500 M46 620 L48.500 617.500" stroke="#555" stroke-width=".7"/>
<path d="M34 619 h1 m1 0 h1 m1 0 h1 M33.500 621.500 h1 m1 0 h1 m1 0 h1 M34 624 h1 m1 0 h1 m1 0 h1 M34.500 626.500 h1 m1 0 h1" stroke="#555" stroke-width="1"/>
<!-- TERMINATION -->
<path d="M38 635 h6 l4.400 4.400 v6.200 l-4.400 4.400 h-6 l-4.400-4.400 v-6.200 z" fill="#fff" stroke="#e03030" stroke-width="1.100"/>
<path d="M38.600 636.800 h4.800 l3.500 3.500 v4.400 l-3.500 3.500 h-4.800 l-3.500-3.500 v-4.400 z" fill="#e63a3a"/>
<path d="M38 639.500 l6 6 M44 639.500 l-6 6" stroke="#fff" stroke-width="2.200"/>
<!-- ANALYSES -->
<path d="M34.500 666.500 L46.500 654" stroke="#8a5a1e" stroke-width="1.600"/><path d="M36.500 655.500 C39 655 44 660 46 666 C42.500 665 37.500 660.500 36.500 655.500 Z" fill="#d8f0ff" stroke="#1050d8" stroke-width="1.100"/>
<path d="M33.500 667.500 V670.500 H48.500 V667.500 M37.500 670.500 v-2 M41 670.500 v-2.500 M44.500 670.500 v-2" stroke="#444" stroke-width=".9"/>
<!-- PLAYBACKS -->
<rect x="34" y="675.500" width="14" height="14" rx="2" fill="#5a6068"/><path d="M40 678.500 v8 l-4.500-4 z M42 678.500 v8 l4.500-4 z" fill="#fff"/>
<!-- green arrow -->
<circle cx="109" cy="662.300" r="4.200" fill="#068006"/>
<path d="M109 662.300 H324" stroke="#068006" stroke-width="5.500"/>
<path d="M320.500 649.800 L345.500 662.300 L320.500 675 Z" fill="#068006"/>
</svg>
</div>

<!-- GRAPHICS -->
<!--GFX0--><svg id="gfx" class="abs" style="left:625px;top:340px" width="664" height="400" viewBox="625 340 664 400" fill="none">
<defs>
<linearGradient id="gcyl" gradientUnits="userSpaceOnUse" x1="956.1" y1="487.2" x2="897.9" y2="628.2">
<stop offset="0" stop-color="#7d848a"/><stop offset=".05" stop-color="#878e95"/><stop offset=".15" stop-color="#939ba2"/><stop offset=".3" stop-color="#9aa2a9"/><stop offset=".42" stop-color="#969ea5"/><stop offset=".48" stop-color="#8f979e"/><stop offset=".56" stop-color="#a0a8af"/><stop offset=".62" stop-color="#8f969d"/><stop offset=".72" stop-color="#6a7075"/><stop offset=".82" stop-color="#4f5357"/><stop offset=".92" stop-color="#3e4145"/><stop offset="1" stop-color="#34373a"/></linearGradient>
<linearGradient id="grod" gradientUnits="userSpaceOnUse" x1="1178.6" y1="611.9" x2="1143.4" y2="697.3">
<stop offset="0" stop-color="#4a4e52"/><stop offset=".18" stop-color="#5b6065"/><stop offset=".4" stop-color="#54585d"/><stop offset=".7" stop-color="#43474a"/><stop offset="1" stop-color="#2f3235"/></linearGradient>
</defs>
<path d="M715.6 388.0 L956.1 487.2 A76.3 40.5 112.4 0 1 897.9 628.2 L657.4 529.0 A76.3 40.5 112.4 0 1 715.6 388.0 Z" fill="url(#gcyl)" stroke="#1e2022" stroke-width="1"/>
<ellipse cx="927" cy="557.7" rx="76.3" ry="40.5" transform="rotate(112.4 927 557.7)" fill="#44484c" stroke="#17191b" stroke-width="1.1"/>
<ellipse cx="926.5" cy="557.5" rx="47.8" ry="25.4" transform="rotate(112.4 926.5 557.5)" fill="#303336" stroke="#141516" stroke-width="1.2"/>
<path d="M901.9 593.8 L904.7 591.4" stroke="#6a7076" stroke-width="1.6"/>
<path d="M899.9 589.0 L903.2 587.1" stroke="#6a7076" stroke-width="1.6"/>
<path d="M898.6 583.2 L902.4 582.0" stroke="#6a7076" stroke-width="1.6"/>
<path d="M898.3 576.7 L902.4 576.0" stroke="#6a7076" stroke-width="1.6"/>
<path d="M898.7 569.6 L903.0 569.6" stroke="#6a7076" stroke-width="1.6"/>
<path d="M900.1 562.1 L904.4 562.7" stroke="#6a7076" stroke-width="1.6"/>
<path d="M902.2 554.4 L906.5 555.7" stroke="#6a7076" stroke-width="1.6"/>
<path d="M951.1 517.7 L1178.6 611.9 A46.2 24.6 112.4 0 1 1143.4 697.3 L915.9 603.1 A46.2 24.6 112.4 0 1 951.1 517.7 Z" fill="url(#grod)" stroke="#17191b" stroke-width="1"/>
<path d="M1136.4 694.4 A46.2 24.6 112.4 0 1 1171.6 609.0 M1129.3 691.5 A46.2 24.6 112.4 0 1 1164.5 606.1 M1122.3 688.6 A46.2 24.6 112.4 0 1 1157.5 603.2 M1115.2 685.7 A46.2 24.6 112.4 0 1 1150.5 600.3 M1108.2 682.8 A46.2 24.6 112.4 0 1 1143.4 597.4 M1101.2 679.9 A46.2 24.6 112.4 0 1 1136.4 594.5 M1094.1 677.0 A46.2 24.6 112.4 0 1 1129.3 591.6 M1087.1 674.1 A46.2 24.6 112.4 0 1 1122.3 588.7 M1080.1 671.2 A46.2 24.6 112.4 0 1 1115.3 585.8 M1073.0 668.3 A46.2 24.6 112.4 0 1 1108.2 582.9 M1066.0 665.4 A46.2 24.6 112.4 0 1 1101.2 580.0 M1058.9 662.5 A46.2 24.6 112.4 0 1 1094.1 577.1 M1051.9 659.6 A46.2 24.6 112.4 0 1 1087.1 574.2 M1044.9 656.7 A46.2 24.6 112.4 0 1 1080.1 571.3 M1037.8 653.8 A46.2 24.6 112.4 0 1 1073.0 568.4 M1030.8 650.9 A46.2 24.6 112.4 0 1 1066.0 565.5 M1023.7 648.0 A46.2 24.6 112.4 0 1 1059.0 562.6 M1016.7 645.1 A46.2 24.6 112.4 0 1 1051.9 559.7 M1009.7 642.2 A46.2 24.6 112.4 0 1 1044.9 556.8 M1002.6 639.3 A46.2 24.6 112.4 0 1 1037.8 553.9 M995.6 636.4 A46.2 24.6 112.4 0 1 1030.8 551.0 M988.6 633.5 A46.2 24.6 112.4 0 1 1023.8 548.1 M981.5 630.6 A46.2 24.6 112.4 0 1 1016.7 545.2 M974.5 627.7 A46.2 24.6 112.4 0 1 1009.7 542.3 M967.4 624.8 A46.2 24.6 112.4 0 1 1002.6 539.4 M960.4 621.9 A46.2 24.6 112.4 0 1 995.6 536.5 M953.4 619.0 A46.2 24.6 112.4 0 1 988.6 533.6 M946.3 616.1 A46.2 24.6 112.4 0 1 981.5 530.7 M939.3 613.2 A46.2 24.6 112.4 0 1 974.5 527.8 M932.2 610.3 A46.2 24.6 112.4 0 1 967.5 524.9 M925.2 607.4 A46.2 24.6 112.4 0 1 960.4 522.0 M918.2 604.5 A46.2 24.6 112.4 0 1 953.4 519.1" stroke="#17191b" stroke-width="1.25"/>
<path d="M1136.4 640.1 L1138.9 635.1 L1141.7 630.4 L1144.8 626.0 L1148.0 622.0 L1151.4 618.5 L1154.8 615.5 L1158.4 613.1 L1161.9 611.2 L1165.3 610.0 L1168.6 609.5 M1129.3 637.2 L1131.9 632.2 L1134.7 627.5 L1137.7 623.1 L1141.0 619.1 L1144.3 615.6 L1147.8 612.6 L1151.3 610.2 L1154.8 608.3 L1158.2 607.1 L1161.6 606.6 M1122.3 634.3 L1124.8 629.3 L1127.6 624.6 L1130.7 620.2 L1133.9 616.2 L1137.3 612.7 L1140.8 609.7 L1144.3 607.3 L1147.8 605.4 L1151.2 604.2 L1154.5 603.7 M1115.2 631.4 L1117.8 626.4 L1120.6 621.7 L1123.6 617.3 L1126.9 613.3 L1130.3 609.8 L1133.7 606.8 L1137.2 604.4 L1140.7 602.5 L1144.2 601.3 L1147.5 600.8 M1108.2 628.5 L1110.7 623.5 L1113.6 618.8 L1116.6 614.4 L1119.8 610.4 L1123.2 606.9 L1126.7 603.9 L1130.2 601.5 L1133.7 599.6 L1137.1 598.4 L1140.4 597.9 M1101.2 625.6 L1103.7 620.6 L1106.5 615.9 L1109.6 611.5 L1112.8 607.5 L1116.2 604.0 L1119.7 601.0 L1123.2 598.6 L1126.7 596.7 L1130.1 595.5 L1133.4 595.0 M1094.1 622.7 L1096.7 617.7 L1099.5 613.0 L1102.5 608.6 L1105.8 604.6 L1109.1 601.1 L1112.6 598.1 L1116.1 595.7 L1119.6 593.8 L1123.1 592.6 L1126.4 592.1 M1087.1 619.8 L1089.6 614.8 L1092.4 610.1 L1095.5 605.7 L1098.7 601.7 L1102.1 598.2 L1105.6 595.2 L1109.1 592.8 L1112.6 590.9 L1116.0 589.7 L1119.3 589.2 M1080.1 616.9 L1082.6 611.9 L1085.4 607.2 L1088.5 602.8 L1091.7 598.8 L1095.1 595.3 L1098.5 592.3 L1102.0 589.9 L1105.5 588.0 L1109.0 586.8 L1112.3 586.3 M1073.0 614.0 L1075.6 609.0 L1078.4 604.3 L1081.4 599.9 L1084.7 595.9 L1088.0 592.4 L1091.5 589.4 L1095.0 587.0 L1098.5 585.1 L1101.9 583.9 L1105.3 583.4 M1066.0 611.1 L1068.5 606.1 L1071.3 601.4 L1074.4 597.0 L1077.6 593.0 L1081.0 589.5 L1084.5 586.5 L1088.0 584.1 L1091.5 582.2 L1094.9 581.0 L1098.2 580.5 M1058.9 608.2 L1061.5 603.2 L1064.3 598.5 L1067.3 594.1 L1070.6 590.1 L1074.0 586.6 L1077.4 583.6 L1080.9 581.2 L1084.4 579.3 L1087.9 578.1 L1091.2 577.6 M1051.9 605.3 L1054.4 600.3 L1057.2 595.6 L1060.3 591.2 L1063.5 587.2 L1066.9 583.7 L1070.4 580.7 L1073.9 578.3 L1077.4 576.4 L1080.8 575.2 L1084.1 574.7 M1044.9 602.4 L1047.4 597.4 L1050.2 592.7 L1053.3 588.3 L1056.5 584.3 L1059.9 580.8 L1063.3 577.8 L1066.9 575.4 L1070.4 573.5 L1073.8 572.3 L1077.1 571.8 M1037.8 599.5 L1040.4 594.5 L1043.2 589.8 L1046.2 585.4 L1049.5 581.4 L1052.8 577.9 L1056.3 574.9 L1059.8 572.5 L1063.3 570.6 L1066.7 569.4 L1070.1 568.9 M1030.8 596.6 L1033.3 591.6 L1036.1 586.9 L1039.2 582.5 L1042.4 578.5 L1045.8 575.0 L1049.3 572.0 L1052.8 569.6 L1056.3 567.7 L1059.7 566.5 L1063.0 566.0 M1023.7 593.7 L1026.3 588.7 L1029.1 584.0 L1032.1 579.6 L1035.4 575.6 L1038.8 572.1 L1042.2 569.1 L1045.7 566.7 L1049.2 564.8 L1052.7 563.6 L1056.0 563.0 M1016.7 590.8 L1019.2 585.8 L1022.1 581.1 L1025.1 576.7 L1028.3 572.7 L1031.7 569.2 L1035.2 566.2 L1038.7 563.8 L1042.2 561.9 L1045.6 560.7 L1048.9 560.1 M1009.7 587.9 L1012.2 582.9 L1015.0 578.2 L1018.1 573.8 L1021.3 569.8 L1024.7 566.3 L1028.2 563.3 L1031.7 560.9 L1035.2 559.0 L1038.6 557.8 L1041.9 557.2 M1002.6 585.0 L1005.2 580.0 L1008.0 575.3 L1011.0 570.9 L1014.3 566.9 L1017.6 563.4 L1021.1 560.4 L1024.6 558.0 L1028.1 556.1 L1031.6 554.9 L1034.9 554.3 M995.6 582.1 L998.1 577.1 L1000.9 572.4 L1004.0 568.0 L1007.2 564.0 L1010.6 560.5 L1014.1 557.5 L1017.6 555.1 L1021.1 553.2 L1024.5 552.0 L1027.8 551.4 M988.6 579.2 L991.1 574.2 L993.9 569.5 L997.0 565.1 L1000.2 561.1 L1003.6 557.6 L1007.0 554.6 L1010.6 552.2 L1014.0 550.3 L1017.5 549.1 L1020.8 548.5 M981.5 576.3 L984.1 571.3 L986.9 566.6 L989.9 562.2 L993.2 558.2 L996.5 554.7 L1000.0 551.7 L1003.5 549.3 L1007.0 547.4 L1010.4 546.2 L1013.8 545.6 M974.5 573.4 L977.0 568.4 L979.8 563.7 L982.9 559.3 L986.1 555.3 L989.5 551.8 L993.0 548.8 L996.5 546.4 L1000.0 544.5 L1003.4 543.3 L1006.7 542.7 M967.4 570.5 L970.0 565.5 L972.8 560.8 L975.8 556.4 L979.1 552.4 L982.5 548.9 L985.9 545.9 L989.4 543.5 L992.9 541.6 L996.4 540.4 L999.7 539.8 M960.4 567.6 L962.9 562.6 L965.8 557.9 L968.8 553.5 L972.0 549.5 L975.4 546.0 L978.9 543.0 L982.4 540.6 L985.9 538.7 L989.3 537.5 L992.6 536.9 M953.4 564.7 L955.9 559.7 L958.7 555.0 L961.8 550.6 L965.0 546.6 L968.4 543.1 L971.9 540.1 L975.4 537.7 L978.9 535.8 L982.3 534.6 L985.6 534.0 M946.3 561.8 L948.9 556.8 L951.7 552.1 L954.7 547.7 L958.0 543.7 L961.3 540.2 L964.8 537.2 L968.3 534.8 L971.8 532.9 L975.3 531.7 L978.6 531.1 M939.3 558.9 L941.8 553.9 L944.6 549.2 L947.7 544.8 L950.9 540.8 L954.3 537.3 L957.8 534.3 L961.3 531.9 L964.8 530.0 L968.2 528.8 L971.5 528.2 M932.2 556.0 L934.8 551.0 L937.6 546.3 L940.6 541.9 L943.9 537.9 L947.3 534.4 L950.7 531.4 L954.2 529.0 L957.7 527.1 L961.2 525.9 L964.5 525.3 M925.2 553.1 L927.7 548.1 L930.6 543.4 L933.6 539.0 L936.8 535.0 L940.2 531.5 L943.7 528.5 L947.2 526.1 L950.7 524.2 L954.1 523.0 L957.5 522.4 M918.2 550.2 L920.7 545.2 L923.5 540.4 L926.6 536.1 L929.8 532.1 L933.2 528.6 L936.7 525.6 L940.2 523.2 L943.7 521.3 L947.1 520.1 L950.4 519.5 M911.1 547.3 L913.7 542.3 L916.5 537.5 L919.5 533.2 L922.8 529.2 L926.2 525.7 L929.6 522.7 L933.1 520.3 L936.6 518.4 L940.1 517.2 L943.4 516.6" stroke="#6d7379" stroke-width="2.2" opacity=".5"/>
<ellipse cx="1161.0" cy="654.6" rx="46.2" ry="24.6" transform="rotate(112.4 1161.0 654.6)" fill="#5a5f64" stroke="#111213" stroke-width="1"/>
<ellipse cx="1163.4" cy="655.6" rx="44.6" ry="23.2" transform="rotate(112.4 1163.4 655.6)" fill="#404448" stroke="#17191b" stroke-width="1.1"/>
<path d="M681.5 455.6 L957.0 570.4" stroke="#b8743a" stroke-width="1" stroke-dasharray="6 2.5 1.5 2.5"/>
<path d="M957.0 570.4 L1183.0 664.5" stroke="#f08a1c" stroke-width="1.2" stroke-dasharray="6 2.5 1.5 2.5"/>
<path d="M1183.0 664.5 L1250.0 692.4" stroke="#b8743a" stroke-width="1" stroke-dasharray="6 2.5 1.5 2.5"/>
<g>
<path d="M925.5 558 V544" stroke="#e03028" stroke-width="1.4"/><circle cx="925.5" cy="541.5" r="2.3" fill="#e8382e"/>
<path d="M925.5 558 L912.5 552.5" stroke="#22c322" stroke-width="1.6"/><circle cx="911" cy="552" r="2.2" fill="#28d028"/>
<path d="M927 555 L915 563" stroke="#28d8e8" stroke-width="1.4"/><circle cx="914" cy="564" r="2.6" fill="#28d8e8"/>
<rect x="917" y="551" width="20" height="8" rx="2" transform="rotate(22.400 927 555)" stroke="#f08a1c" stroke-width="1.500"/>
<path d="M918 556 c4-6 8-6 10 0 c2 5 6 5 9 0" stroke="#f08a1c" stroke-width="1.100"/>
<path d="M930 560 c4 6 10 6 14 2" stroke="#28d8e8" stroke-width="1.300"/>
<path d="M946 556.500 C940 566 944 581 953 584 C964 585 976 574 974.500 562 C973.500 558 970 556.500 968.500 557.500" stroke="#28d8e8" stroke-width="1.500"/>
<path d="M953 560 C948 566 948 574 953 578" stroke="#f08a1c" stroke-width="1.500"/><circle cx="953.500" cy="578.500" r="1.500" fill="#f08a1c"/>
<path d="M952 567.500 L967 573.500 m-5-4.500 l5 4.500 l-6.500 1" stroke="#f08a1c" stroke-width="1.400"/>
</g>
</svg><!--GFX1-->

<!--GTB0-->
<div class="abs" style="left:653px;top:173px;width:284.500px;height:28px;background:#fdfdfd;border:1px solid #c6c9cd"></div>
<div class="abs" style="left:654px;top:174px;width:4.500px;height:26px;background:#e9ebed"></div>
<div class="abs" style="left:932px;top:174px;width:4.500px;height:26px;background:#e9ebed"></div>
<div class="abs" style="left:878.500px;top:175px;width:25px;height:24.500px;background:linear-gradient(180deg,#cfd1d4,#dfe0e2 30%,#f2f3f4);border:1px solid #c6c8cb;border-top-color:#b9bbbe"></div>
<div class="abs" style="left:905px;top:175px;width:25px;height:24.500px;background:linear-gradient(180deg,#cfd1d4,#dfe0e2 30%,#f2f3f4);border:1px solid #c6c8cb;border-top-color:#b9bbbe"></div>
<svg class="abs" style="left:650px;top:168px" width="295" height="40" viewBox="650 168 295 40" fill="none">
<defs><linearGradient id="grp" x1="0" y1="0" x2="1" y2="1"><stop offset="0" stop-color="#f4f8fc"/><stop offset=".5" stop-color="#b8cce4"/><stop offset="1" stop-color="#6a90c0"/></linearGradient></defs>
<path d="M658.500 174 V200.500 M685.500 174 V200.500 M712.500 174 V200.500 M739.500 174 V200.500 M766.500 174 V200.500 M794.500 174 V200.500 M822.500 174 V200.500 M849.500 174 V200.500 M877 174 V200.500" stroke="#dcdee1" stroke-width="1"/>
<!-- zoom window -->
<rect x="664.500" y="180" width="13" height="12.500" fill="#fff" stroke="#1030a0" stroke-width="1.300"/><path d="M664 180 h14" stroke="#1030a0" stroke-width="2"/>
<circle cx="671.500" cy="186.500" r="4.400" fill="#f4f4f4" stroke="#333" stroke-width="1.100"/><path d="M675 190 L679.500 194.500" stroke="#8a4a1e" stroke-width="1.800" stroke-linecap="round"/>
<!-- zoom in -->
<circle cx="697.300" cy="185.200" r="5.800" fill="#fafafa" stroke="#555" stroke-width="1"/><path d="M694.300 185.200 h6 M697.300 182.200 v6" stroke="#111" stroke-width="1.700"/><path d="M701.500 189.500 L706.500 194.500" stroke="#8a4a1e" stroke-width="1.800" stroke-linecap="round"/>
<!-- zoom out -->
<circle cx="724.200" cy="185.200" r="5.800" fill="#fafafa" stroke="#555" stroke-width="1"/><path d="M721.200 185.200 h6" stroke="#111" stroke-width="1.700"/><path d="M728.500 189.500 L733.500 194.500" stroke="#8a4a1e" stroke-width="1.800" stroke-linecap="round"/>
<!-- repaint -->
<rect x="746.800" y="180.700" width="12.500" height="13.500" fill="url(#grp)" stroke="#1030a0" stroke-width="1.300"/><path d="M751.500 194 C752 190 754.500 187.500 758 186" stroke="#123" stroke-width="1.300"/><path d="M750 185 l.8.800 M752 183 l.8.800 M753.500 186.500 l.8.800 M755.500 184 l.8.800 M751 188.500 l.8.800" stroke="#fff" stroke-width="1"/>
<!-- cube -->
<path d="M773.500 184 L776 181.500 H787 V190.500 L784.500 193.500 H773.500 Z" fill="#fff" stroke="#555" stroke-width="1"/><path d="M773.500 184 L776 181.500 H787 L784.500 184 Z" fill="#9ff6f6" stroke="#555" stroke-width=".7"/><path d="M784.500 184 L787 181.500 V190.500 L784.500 193.500 Z" fill="#18a0a0" stroke="#555" stroke-width=".7"/>
<path d="M791 195 v3 h-3 z" fill="#555"/>
<!-- AB -->
<path d="M800.500 192.500 V185 l2.500-2.500 h2" stroke="#666" stroke-width="1.100"/><path d="M800.500 192.500 H811 l2.500-2.500" stroke="#666" stroke-width="1.100"/><path d="M801 185 l2.500-2.500 h2.500 v1.500 h-2 l-1.500 1.500 z" fill="#9ff6f6"/><path d="M811 192 l3-3 v-1.500 h-2.500 z" fill="#18a0a0"/>
<text x="805.500" y="187" font-family="Liberation Mono" font-weight="bold" font-size="9" fill="#111" letter-spacing="-.8">AB</text>
<path d="M819 195 v3 h-3 z" fill="#555"/>
<!-- camera gray -->
<rect x="828.800" y="179.500" width="11.500" height="13.500" fill="#fafafa" stroke="#c4c4c4" stroke-width="1"/><path d="M831 182 h7" stroke="#d8d8d8" stroke-width="1"/><path d="M830.500 181 v11" stroke="#d0d0d0" stroke-width=".8" stroke-dasharray="1.500 1.500"/>
<rect x="831.500" y="186.500" width="12.500" height="7.500" rx="1" fill="#c9c9c9" stroke="#aaa" stroke-width=".8"/><rect x="835" y="185" width="5" height="2" fill="#c0c0c0"/><circle cx="837.700" cy="190.300" r="2.300" fill="#eee" stroke="#999" stroke-width=".8"/>
<!-- datum x's -->
<g stroke="#8a4a1e" stroke-width="1.500"><path d="M855.500 179.500 l4.500 4.500 m0-4.500 l-4.500 4.500"/><path d="M863 183 l2.500-3.500 M860 188 l2-2.800 M857.500 193.500 l2-2.800" stroke-width="1.800"/><path d="M862.500 186 L871 194 M870.500 185.500 L864 194.500 M861.500 190.500 L871.500 189.500" stroke-width="1.400"/></g>
<path d="M874 195 v3 h-3 z" fill="#555"/>
<!-- annotation display -->
<rect x="883.500" y="179.500" width="8.500" height="4" fill="#f7f2a2" stroke="#8a8420" stroke-width="1"/>
<path d="M892.500 181.500 h4.500 l-3.500 5 h3.500" stroke="#222" stroke-width="1"/><path d="M894 183.500 v4.500" stroke="#222" stroke-width=".8"/>
<ellipse cx="893.500" cy="192" rx="5" ry="2.600" fill="#d8d8d8" stroke="#888" stroke-width=".8"/><circle cx="893.500" cy="192" r="1.900" fill="#4a6a8a"/>
<!-- spin center -->
<path d="M912.500 181.500 L917 186.500 L912.500 192.500 M917 186.500 H923" stroke="#222" stroke-width="1.200"/>
<circle cx="912.500" cy="181.300" r="2.500" fill="#18c818" stroke="#0a6a0a" stroke-width=".6"/><circle cx="923.200" cy="186.400" r="2.500" fill="#e81818" stroke="#6a0a0a" stroke-width=".6"/><circle cx="912.500" cy="192.400" r="2.500" fill="#28e0e8" stroke="#0a7a8a" stroke-width=".6"/>
</svg>
<!-- tolerance text -->
<div class="abs" style="left:1180.500px;top:770.500px;font-size:10.500px;color:#666;line-height:11.600px;white-space:nowrap;letter-spacing:-.05px">X.X+-0.1</div>
<div class="abs" style="left:1178px;top:782.100px;font-size:10.500px;color:#666;line-height:11.600px;white-space:nowrap;letter-spacing:-.05px">X.XX+-0.01</div>
<div class="abs" style="left:1175.500px;top:793.700px;font-size:10.500px;color:#666;line-height:11.600px;white-space:nowrap;letter-spacing:-.05px">X.XXX+-0.001</div>
<div class="abs" style="left:1178.500px;top:805.300px;font-size:10.500px;color:#666;line-height:11.600px;white-space:nowrap;letter-spacing:-.05px">ANG.+-0.5</div>
<!--GTB1-->

<!-- DIALOG -->
<div id="dialog">
<style>
#dframe{left:344px;top:200px;width:280px;height:585.800px;background:#c9cdd2;border:1px solid #a3a7ac}
#dbody{left:348px;top:204px;width:272px;height:578.300px;background:#eff0f2}
#dtitle{left:348px;top:204px;width:272px;height:18.500px;background:linear-gradient(180deg,#f6f7f8,#eceef0 55%,#dfe2e5);border-bottom:1px solid #c4c7cb}
.fs{position:absolute;border:1px solid #cfd2d6;box-shadow:1px 1px 0 #fafafa inset, 1px 1px 0 #fafafa}
.leg{background:#eff0f2}
.leg.pg{background:#f4f5f6}
.dtab{position:absolute;top:314px;height:18px;border:1px solid #cdd0d4;border-bottom:none;background:#e9ebed;font-family:"Liberation Sans",sans-serif;font-weight:bold;font-size:12.500px;color:#444;text-align:center;line-height:17px;white-space:nowrap}
.dtab.act{top:312px;height:21px;background:#f4f5f6;color:#111;line-height:19px;z-index:2;border-color:#c4c7cb}
.dtab.dis{color:#b5b5b5}
#dpage{left:348px;top:331px;width:271.500px;height:414px;background:#f4f5f6;border-top:1px solid #c9ccd0;border-right:1px solid #dfe1e4}
</style>
<div class="abs" id="dframe"></div>
<div class="abs" id="dbody"></div>
<div class="abs" id="dtitle"></div>
<div class="abs sans" style="left:348px;top:205px;width:252px;text-align:center;font-weight:bold;font-size:13px;color:#333;line-height:16px;letter-spacing:.5px;padding-left:0">分析定義</div>
<svg class="abs" style="left:604px;top:208px" width="11" height="10" viewBox="0 0 11 10"><path d="M1.700 1.500 L9 8.500 M9 1.500 L1.700 8.500" stroke="#444" stroke-width="2"/></svg>
<!-- name -->
<div class="fs" style="left:352px;top:229px;width:264px;height:37px"></div>
<div class="leg" style="left:368px;top:223px">名稱</div>
<div class="inp" style="left:360px;top:238px;width:248px;height:19.500px;line-height:18px;letter-spacing:-.3px;color:#444">AnalysisDefinition1</div>
<!-- type -->
<div class="fs" style="left:352px;top:273px;width:264px;height:35.500px"></div>
<div class="leg" style="left:368px;top:267px">類型</div>
<div class="sel" style="left:360px;top:282px;width:248px;height:18.500px">方位<div class="selarr"></div></div>
<!-- tabs -->
<div class="dtab act" style="left:348px;width:63px">偏好設定</div>
<div class="dtab" style="left:410.500px;width:38.500px">馬達</div>
<div class="dtab dis" style="left:448.500px;width:65.500px">外部負載</div>
<div class="abs" id="dpage"></div>
<!-- graphical display -->
<div class="fs" style="left:353.500px;top:341px;width:261.500px;height:135.500px"></div>
<div class="leg pg" style="left:372px;top:335px">圖形顯示</div>
<div class="dl" style="left:360px;top:353px">開始時間</div>
<div class="inp" style="left:465px;top:350px;width:142px;height:19.500px;line-height:18px">0</div>
<div class="sel" style="left:360px;top:371px;width:247px;height:18px;line-height:15px;padding-left:6px;background:linear-gradient(180deg,#fbfbfb,#e9ebed 70%,#dcdfe2)">長度和速率<div class="selarr"></div></div>
<div class="dl" style="left:360px;top:412px">畫面計數</div>
<div class="abs serif" style="left:468.500px;top:412px;font-size:12px;color:#a8a8a8;line-height:14px">301</div>
<div class="inp" style="left:465px;top:410px;width:142px;height:19px;background:transparent;border-color:#d8dadd"></div>
<div class="dl" style="left:360px;top:432px">畫面播放頻率</div>
<div class="inp" style="left:465px;top:429px;width:142px;height:19.700px;line-height:18px">10</div>
<div class="dl" style="left:360px;top:452px">最小間隔</div>
<div class="inp" style="left:465px;top:449.200px;width:142px;height:19.500px;line-height:17.500px">0.1</div>
<!-- highlight box -->
<div class="abs serif" style="left:361px;top:391.500px;font-size:12px;color:#222;line-height:14px;white-space:nowrap;letter-spacing:-.3px;word-spacing:2px">End Time</div>
<div class="inp" style="left:465px;top:389.500px;width:142px;height:19px;line-height:17px">30<span style="display:inline-block;width:1px;height:12px;background:#000;vertical-align:-2px"></span></div>
<div class="abs" style="left:348px;top:380px;width:268.500px;height:37px;border:2.200px solid #be0a0a;filter:drop-shadow(2px 3px 2.500px rgba(0,0,0,.45));z-index:6"></div>
<!-- locked entities -->
<div class="fs" style="left:353.500px;top:486.500px;width:261.500px;height:188.500px"></div>
<div class="leg pg" style="left:368px;top:481px">鎖定圖元</div>
<div class="abs" style="left:365px;top:495px;width:160px;height:170.500px;background:#fff;border:1px solid #b4b8bc"></div>
<div class="abs sans" style="left:555px;top:634px;font-size:12px;font-weight:bold;color:#c9c9c9;line-height:14px;letter-spacing:0">升離</div>
<div class="sel" style="left:533px;top:647px;width:69.500px;height:18px;line-height:16px;color:#8a8a8a;padding-left:6px;background:linear-gradient(180deg,#fafafa,#eceef0)">啟用<div class="selarr dis" style="width:14px"></div></div>
<!-- initial config -->
<div class="fs" style="left:353.500px;top:683px;width:261.500px;height:60.300px"></div>
<div class="leg pg" style="left:368px;top:677px">初始組態</div>
<div class="abs serif" style="left:388px;top:699px;font-size:12px;color:#222;line-height:14px;letter-spacing:-.2px">Current</div>
<div class="abs serif" style="left:388px;top:716.500px;font-size:12px;color:#222;line-height:14px;letter-spacing:-.2px">Snapshot:</div>
<div class="sel serif" style="left:447px;top:714px;width:128px;height:18.800px;line-height:16px;color:#9a9a9a;padding-left:5px;background:#f1f2f4;border-color:#d3d6d9">Snapshot1<div class="selarr dis" style="width:14px;background:#f1f2f4;border-color:#d8dadd"></div></div>
<svg class="abs" style="left:340px;top:480px;z-index:4" width="290" height="310" viewBox="340 480 290 310" fill="none">
<defs><radialGradient id="grad"><stop offset="0" stop-color="#fff"/><stop offset="1" stop-color="#e4e6e8"/></radialGradient></defs>
<!-- radios -->
<circle cx="374" cy="706" r="5.800" fill="url(#grad)" stroke="#8a8e92" stroke-width="1"/><circle cx="374" cy="706" r="2.800" fill="#2a2a2a"/>
<circle cx="374" cy="723.500" r="5.800" fill="url(#grad)" stroke="#8a8e92" stroke-width="1"/>
<!-- glasses -->
<g stroke="#8a8a8a" stroke-width="1"><ellipse cx="587.500" cy="723" rx="3.500" ry="4"/><ellipse cx="597" cy="723" rx="3.500" ry="4"/><path d="M591 722 h2.500 M587 719 c1-3 3-3.500 4-2.500 M600.500 721.500 l3-3"/></g>
<!-- lock icons -->
<g><rect x="565.5" y="499.500" width="4.500" height="6.500" fill="#bfeaf8" stroke="#3a8ad8" stroke-width="1"/><rect x="571" y="501.500" width="6.500" height="12" fill="#f0dc6a" stroke="#a08a28" stroke-width=".9"/><rect x="562.500" y="508.500" width="8.500" height="5" fill="#f8f0a8" stroke="#a08a28" stroke-width=".9"/>
<rect x="575.500" y="513" width="6" height="4.500" fill="#c8a050" stroke="#4a3010" stroke-width=".9"/><path d="M577 513 v-1.300 a1.500 1.500 0 0 1 3 0 v1.300" stroke="#4a3010" stroke-width="1"/></g>
<g><path d="M565 531 V546.500" stroke="#c0a048" stroke-width="2.800"/><path d="M566 530 L581.500 536.500" stroke="#c0a048" stroke-width="2.200"/><circle cx="565" cy="529.800" r="2.300" fill="#d8f2ff" stroke="#2a7ae0" stroke-width="1.200"/>
<rect x="575.500" y="541" width="6" height="4.500" fill="#c8a050" stroke="#4a3010" stroke-width=".9"/><path d="M577 541 v-1.300 a1.500 1.500 0 0 1 3 0 v1.300" stroke="#4a3010" stroke-width="1"/></g>
<g><ellipse cx="572.300" cy="568.800" rx="8.300" ry="5.300" transform="rotate(8 572.300 568.800)" fill="#b8ecfc" stroke="#1c6ad0" stroke-width="1.100"/><circle cx="571" cy="569" r="1.300" fill="#e8e8e8" stroke="#444" stroke-width=".9"/><path d="M571.500 556 v6.500" stroke="#1c3a9a" stroke-width="1.800"/><path d="M569.200 560.500 l2.300 2.800 l2.300-2.800" stroke="#1c3a9a" stroke-width="1"/></g>
<g><path d="M565 589 V601.500" stroke="#c0a850" stroke-width="2.800"/><path d="M570 587 L581.500 591.500" stroke="#c0a850" stroke-width="2.200"/><circle cx="565" cy="585.800" r="2.300" fill="#d8f2ff" stroke="#6ab8f0" stroke-width="1.200"/>
<rect x="573.500" y="595.500" width="8" height="6.500" fill="#fff" stroke="#2a4ac0" stroke-width="1"/><path d="M575 598.500 l2 2 l3.500-4.500" stroke="#111" stroke-width="1.300"/></g>
<path d="M565 613.500 L579.500 627" stroke="#a01010" stroke-width="2.800" stroke-linecap="round"/><path d="M580 614 L566 627.500" stroke="#a01010" stroke-width="2" stroke-linecap="round"/><circle cx="579.500" cy="629" r=".8" fill="#a01010"/>
</svg>
<!-- buttons -->
<div class="abs" style="left:348px;top:746px;width:272px;height:1px;background:#d4d7da"></div>
<div class="btn" style="left:436px;top:754px;width:58px;background:linear-gradient(180deg,#c2e4fb,#9ed2f6 60%,#8cc8f2);border-color:#8cbde4;padding-left:12px">確定</div>
<div class="btn" style="left:498px;top:754px;width:66px">執行</div>
<div class="btn" style="left:570px;top:754px;width:46px">取消</div>
</div>

<!-- STATUS -->
<div class="abs" id="status"></div>
<div id="status-items">
<div class="abs" style="left:10px;top:840.500px;width:22.500px;height:22px;background:linear-gradient(180deg,#d6d8db,#ebecee 35%,#f4f5f6);border:1px solid #c3c6c9;border-top-color:#b4b7ba"></div>
<div class="abs" style="left:36px;top:840.500px;width:22.500px;height:22px;background:#f4f5f6;border:1px solid #cfd2d5"></div>
<div class="abs" style="left:67px;top:840px;width:1px;height:22px;background:#d2d5d8"></div>
<div class="abs" style="left:74.800px;top:835.700px;width:5.400px;height:5.400px;border-radius:50%;background:#0000f0"></div>
<div class="abs" style="left:85px;top:831px;font-size:11px;color:#333;line-height:14px;white-space:nowrap;letter-spacing:0">零件的自動再生已經完成。</div>
<div class="abs" style="left:893px;top:832px;width:1px;height:30px;background:#d9dbde"></div>
<div class="abs" style="left:929px;top:832px;width:1px;height:30px;background:#d9dbde"></div>
<div class="abs" style="left:962px;top:832px;width:1px;height:30px;background:#d9dbde"></div>
<div class="abs" style="left:1007px;top:832px;width:1px;height:30px;background:#d9dbde"></div>
<div class="abs" style="left:934px;top:843.500px;width:9.600px;height:9.600px;border-radius:50%;background:#3dcf3d"></div>
<div class="abs" style="left:946.500px;top:846px;width:5px;height:5px;border-radius:50%;background:#c9cbcd"></div>
<div class="abs" style="left:953.500px;top:846px;width:5px;height:5px;border-radius:50%;background:#c9cbcd"></div>
<div class="abs" style="left:965.500px;top:834.500px;width:39px;height:27px;border:1px solid #bfc2c6;border-radius:3px;background:linear-gradient(180deg,#ffffff,#eff0f2 60%,#e4e6e8)"></div>
<div class="sel" style="left:1105px;top:838px;width:165.500px;height:18.500px;line-height:16px;background:linear-gradient(180deg,#ffffff,#f1f2f3);border-color:#c2c5c9;padding-left:5px">機構<div class="selarr" style="width:14px"></div></div>
<svg class="abs" style="left:0;top:825px" width="1293" height="45" viewBox="0 825 1293 45" fill="none">
<g stroke="#0a2a9a" stroke-width="1.200" fill="#fff"><rect x="16.500" y="843.500" width="3" height="3"/><rect x="16.500" y="849.500" width="3" height="3"/><rect x="16.500" y="855.500" width="3" height="3"/><rect x="23.500" y="849.500" width="3" height="3"/></g><path d="M18 846.500 v3 m0 3 v3 M19.500 851 h4" stroke="#222" stroke-width="1"/>
<circle cx="46.500" cy="851.500" r="6.500" fill="#3a9ae8"/><path d="M42 848 c2-2 5-2.500 7-1 c-1 3-3 2-4 4.500 c-1 2 1 3-1 5 c-2-1-3.500-3-3.500-5 z" fill="#5cc85c"/><path d="M49.500 852 c1.500 0 2.500 1 2.500 2.500 c-1 1.500-2 2.500-3.500 3 z" fill="#5cc85c"/>
<ellipse cx="47" cy="851.500" rx="9.500" ry="3.600" transform="rotate(-42 47 851.500)" stroke="#f0a818" stroke-width="1.700"/>
<g><path d="M979 858 v-7 l1.300-5 h2.200 l.8 4.500 v7.500 z M993 858 v-7 l-1.300-5 h-2.200 l-.8 4.500 v7.500 z" fill="#3a3a3a" stroke="#111" stroke-width=".8"/><rect x="983" y="849.500" width="6" height="4" fill="#222"/><path d="M980.700 851 v6 M991.300 851 v6" stroke="#ddd" stroke-width="1.100"/><rect x="979" y="856" width="4.500" height="2.200" fill="#d8d8d8" stroke="#111" stroke-width=".5"/><rect x="988.500" y="856" width="4.500" height="2.200" fill="#d8d8d8" stroke="#111" stroke-width=".5"/></g>
<ellipse cx="27" cy="875" rx="12.500" ry="9" fill="#e9ecef" stroke="#2a5a78" stroke-width="1.200"/>
</svg>
</div>
</body>
</html>
